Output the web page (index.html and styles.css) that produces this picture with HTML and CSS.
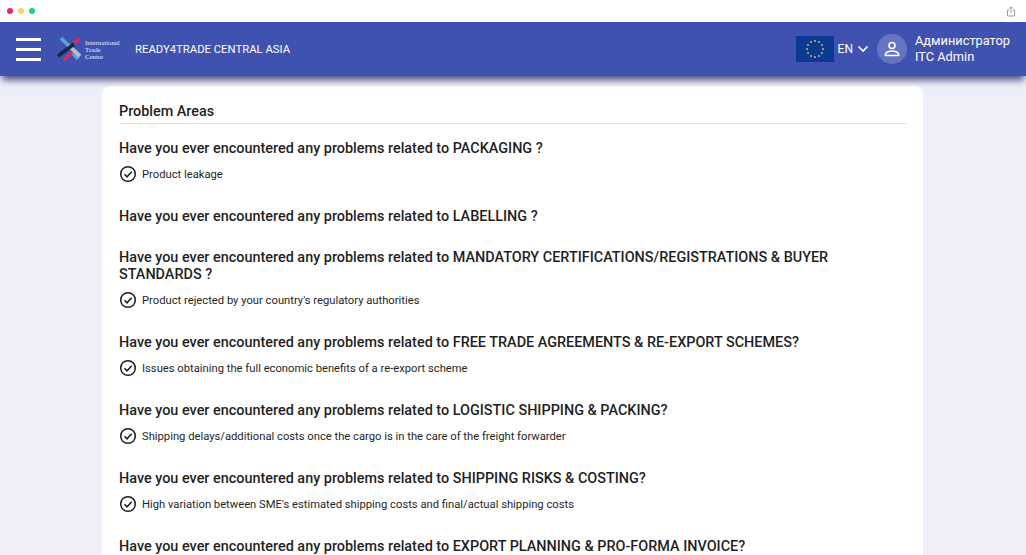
FILE: index.html
```html
<!DOCTYPE html>
<html lang="en">
<head>
<meta charset="utf-8">
<title>Problem Areas</title>
<link rel="stylesheet" href="styles.css">
</head>
<body>
<div class="chrome">
  <div class="dots"><span class="dot red"></span><span class="dot yellow"></span><span class="dot green"></span></div>
  <svg class="share" width="10" height="11" viewBox="0 0 10 11" fill="none" stroke="#9a9aa6" stroke-width="1"><path d="M3 4H1.500v6h7V4H7"/><path d="M5 7V1M3.200 2.600 5 .8l1.800 1.800"/></svg>
</div>
<header class="topbar">
  <div class="burger"><span></span><span></span><span></span></div>
  <div class="logo">
    <svg width="25" height="26" viewBox="0 0 25 26" fill="none" stroke-width="3.800">
      <path d="M4 2 11 9" stroke="#58a5d8"/>
      <path d="M16 17 21 23" stroke="#58a5d8"/>
      <path d="M11 9 23 20" stroke="#b5bdca"/>
      <path d="M1 20 17 8" stroke="#14284f"/>
      <path d="M22 3 17 7" stroke="#dc2a5e"/>
      <path d="M7 24 15 16" stroke="#dc2a5e"/>
    </svg>
    <div class="logo-text">International<br>Trade<br>Centre</div>
  </div>
  <div class="brand">READY4TRADE CENTRAL ASIA</div>
  <div class="spacer"></div>
  <svg class="flag" width="38" height="26" viewBox="0 0 38 26">
    <rect width="38" height="26" fill="#0b3a94"/>
    <g fill="#d9bb35">
      <circle cx="19" cy="5" r="1"/><circle cx="23" cy="6" r="1"/><circle cx="26" cy="9" r="1"/><circle cx="27" cy="13" r="1"/><circle cx="26" cy="17" r="1"/><circle cx="23" cy="20" r="1"/><circle cx="19" cy="21" r="1"/><circle cx="15" cy="20" r="1"/><circle cx="12" cy="17" r="1"/><circle cx="11" cy="13" r="1"/><circle cx="12" cy="9" r="1"/><circle cx="15" cy="6" r="1"/>
    </g>
  </svg>
  <span class="lang">EN</span>
  <svg class="chev" width="12" height="8" viewBox="0 0 12 8" fill="none" stroke="#fff" stroke-width="1.600"><path d="M1.500 1.500 6 6l4.500-4.500"/></svg>
  <div class="avatar">
    <svg width="16" height="16" viewBox="0 0 16 16" fill="none" stroke="#fff" stroke-width="1.600"><circle cx="8" cy="4.500" r="3"/><path d="M1.500 14.500v-1.500c0-1.500 3-3 6.500-3s6.500 1.500 6.500 3v1.500z"/></svg>
  </div>
  <div class="user">Администратор<br>ITC Admin</div>
</header>
<main class="content">
  <section class="card">
    <h2 class="card-title">Problem Areas</h2>
    <div class="q"><h3>Have you ever encountered any problems related to PACKAGING ?</h3>
      <div class="item"><svg class="check" viewBox="0 0 18 18" fill="none" stroke="#1c1c1c" stroke-width="1.500"><circle cx="9" cy="9" r="7.300"/><path d="M5.500 9.300 8 11.800l4.700-5"/></svg>Product leakage</div></div>
    <div class="q"><h3>Have you ever encountered any problems related to LABELLING ?</h3></div>
    <div class="q"><h3>Have you ever encountered any problems related to MANDATORY CERTIFICATIONS/REGISTRATIONS &amp; BUYER STANDARDS ?</h3>
      <div class="item"><svg class="check" viewBox="0 0 18 18" fill="none" stroke="#1c1c1c" stroke-width="1.500"><circle cx="9" cy="9" r="7.300"/><path d="M5.500 9.300 8 11.800l4.700-5"/></svg>Product rejected by your country's regulatory authorities</div></div>
    <div class="q"><h3>Have you ever encountered any problems related to FREE TRADE AGREEMENTS &amp; RE-EXPORT SCHEMES?</h3>
      <div class="item"><svg class="check" viewBox="0 0 18 18" fill="none" stroke="#1c1c1c" stroke-width="1.500"><circle cx="9" cy="9" r="7.300"/><path d="M5.500 9.300 8 11.800l4.700-5"/></svg>Issues obtaining the full economic benefits of a re-export scheme</div></div>
    <div class="q"><h3>Have you ever encountered any problems related to LOGISTIC SHIPPING &amp; PACKING?</h3>
      <div class="item"><svg class="check" viewBox="0 0 18 18" fill="none" stroke="#1c1c1c" stroke-width="1.500"><circle cx="9" cy="9" r="7.300"/><path d="M5.500 9.300 8 11.800l4.700-5"/></svg>Shipping delays/additional costs once the cargo is in the care of the freight forwarder</div></div>
    <div class="q"><h3>Have you ever encountered any problems related to SHIPPING RISKS &amp; COSTING?</h3>
      <div class="item"><svg class="check" viewBox="0 0 18 18" fill="none" stroke="#1c1c1c" stroke-width="1.500"><circle cx="9" cy="9" r="7.300"/><path d="M5.500 9.300 8 11.800l4.700-5"/></svg>High variation between SME's estimated shipping costs and final/actual shipping costs</div></div>
    <div class="q last"><h3>Have you ever encountered any problems related to EXPORT PLANNING &amp; PRO-FORMA INVOICE?</h3></div>
  </section>
</main>
</body>
</html>
```
FILE: styles.css
```css
* { box-sizing: border-box; }
html, body { margin: 0; height: 100%; overflow: hidden; }
body { background: #eeeef9; font-family: Roboto, "Liberation Sans", sans-serif; color: #1f1f1f; display: flex; flex-direction: column; }
.chrome { height: 22px; flex: none; background: #fff; display: flex; align-items: center; justify-content: space-between; padding: 0 10px 0 7px; }
.dots { display: flex; gap: 5px; }
.dot { width: 6px; height: 6px; border-radius: 50%; }
.red { background: #f5245a; }
.yellow { background: #fbd25c; }
.green { background: #0fd77a; }
.topbar { height: 54px; flex: none; background: #4052b0; box-shadow: 0 6px 7px -2px rgba(30, 35, 100, .8); display: flex; align-items: center; padding: 0 16px; color: #fff; position: relative; }
.burger { width: 25px; display: flex; flex-direction: column; gap: 7px; margin-right: 16px; }
.burger span { height: 3px; background: #fff; }
.logo { display: flex; align-items: center; gap: 3px; width: 78px; }
.logo-text { font-family: "Liberation Serif", serif; font-size: 6.8px; line-height: 7px; color: #e6e9f7; }
.brand { font-size: 11.3px; font-weight: 400; white-space: nowrap; }
.spacer { flex: 1; }
.flag { flex: none; }
.lang { font-size: 12px; margin-left: 4px; }
.chev { margin-left: 4px; }
.avatar { width: 30px; height: 30px; border-radius: 50%; background: #6675c2; margin-left: 8px; display: flex; align-items: center; justify-content: center; }
.user { font-size: 12.8px; line-height: 16px; margin-left: 8px; white-space: nowrap; }
.content { flex: 1; min-height: 0; padding: 10px 103px 0 102px; display: flex; flex-direction: column; }
.card { flex: 1; background: #fff; border-radius: 8px 8px 0 0; padding: 17px 16px 0 17px; }
.card-title { font-size: 14.4px; font-weight: 500; line-height: 18px; margin: 0 0 16px; padding-bottom: 2px; border-bottom: 1px solid #e4e4e8; }
.q { margin-bottom: 24px; }
.last { margin-bottom: 0; }
h3 { font-size: 14.41px; font-weight: 500; line-height: 17px; margin: 0; }
.item { display: flex; align-items: center; gap: 5px; font-size: 11.22px; line-height: 18px; margin-top: 9px; }
.check { width: 18px; height: 18px; flex: none; margin: -1px 0 1px; }
```
